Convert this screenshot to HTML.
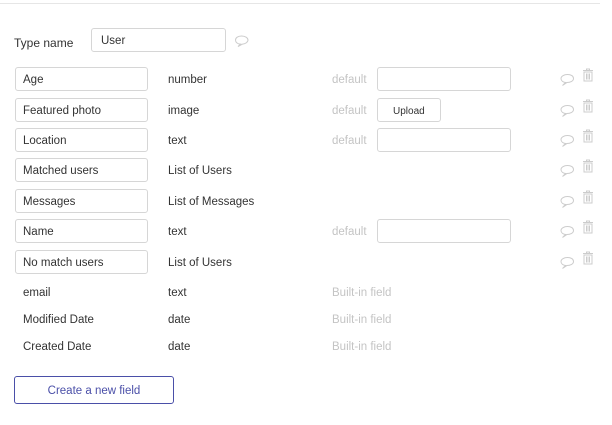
<!DOCTYPE html>
<html><head><meta charset="utf-8"><style>
body{margin:0;width:612px;height:425px;background:#fff;font-family:"Liberation Sans",sans-serif;font-size:11.5px;color:#333;position:relative;overflow:hidden}
.a{position:absolute}
.box{position:absolute;border:1px solid #d6d6d6;border-radius:3px;box-sizing:border-box;background:#fff}
.t{position:absolute;line-height:14px}
.g{color:#c4c4c4}
</style></head><body>
<div class="a" style="left:0;top:3px;width:600px;height:1px;background:#e6e6e6"></div>
<div class="t" style="left:14px;top:36px;font-size:12px">Type name</div>
<div class="box" style="left:91px;top:28px;width:135px;height:24px"></div>
<div class="t" style="left:101px;top:34px">User</div>
<svg class="a" style="left:234px;top:35px" width="15" height="13" viewBox="0 0 15 13"><path d="M7.5 1C3.9 1 1.5 2.8 1.5 5s2 4 5 4.1L4 11.5l4.5-2.4c3-.3 5.5-2 5.5-4.1C14 2.8 11.2 1 7.5 1z" fill="none" stroke="#ccc"/></svg>

<div id="rows"></div>
<script>
var rows=[["Age","number",1,79],["Featured photo","image",2,110],["Location","text",1,140],["Matched users","List of Users",0,170],["Messages","List of Messages",0,201],["Name","text",1,231],["No match users","List of Users",0,262]];
var h="";
rows.forEach(function(r){var y=r[3];
h+='<div class="box" style="left:15px;top:'+(y-12)+'px;width:133px;height:24px"></div>';
h+='<div class="t" style="left:23px;top:'+(y-6)+'px">'+r[0]+'</div>';
h+='<div class="t" style="left:168px;top:'+(y-6)+'px">'+r[1]+'</div>';
if(r[2]){h+='<div class="t g" style="left:332px;top:'+(y-6)+'px">default</div>';
if(r[2]==1)h+='<div class="box" style="left:377px;top:'+(y-12)+'px;width:134px;height:24px"></div>';
else h+='<div class="box" style="left:377px;top:'+(y-12)+'px;width:64px;height:24px"></div><div class="t" style="left:393px;top:'+(y-5)+'px;font-size:10px">Upload</div>';}
h+='<svg class="a" style="left:559px;top:'+(y-6)+'px" width="16" height="14" viewBox="0 0 16 14"><path d="M8.5 1.5C5 1.5 2 3.2 2 5.5s2 3.8 4.5 4L3.5 12.5l4.5-3c3.5 0 6.5-1.6 6.5-4S12 1.5 8.5 1.5z" fill="none" stroke="#ccc"/></svg>';
h+='<svg class="a" style="left:582px;top:'+(y-11)+'px" width="12" height="14" viewBox="0 0 12 14"><path d="M1 2.5h10M4.5 2.5V1h3v1.5M2 4h8v9H2z M4.5 5.5v6M6 5.5v6M7.5 5.5v6" fill="none" stroke="#ccc"/></svg>';
});
[["email","text",292],["Modified Date","date",319],["Created Date","date",346]].forEach(function(r){
h+='<div class="t" style="left:23px;top:'+(r[2]-6)+'px">'+r[0]+'</div><div class="t" style="left:168px;top:'+(r[2]-6)+'px">'+r[1]+'</div><div class="t g" style="left:332px;top:'+(r[2]-6)+'px">Built-in field</div>';});
document.getElementById("rows").innerHTML=h;
</script>
<div class="box" style="left:14px;top:376px;width:160px;height:28px;border-color:#4a4fa8"></div>
<div class="t" style="left:14px;top:384px;width:160px;text-align:center;color:#4a4fa8">Create a new field</div>
</body></html>
